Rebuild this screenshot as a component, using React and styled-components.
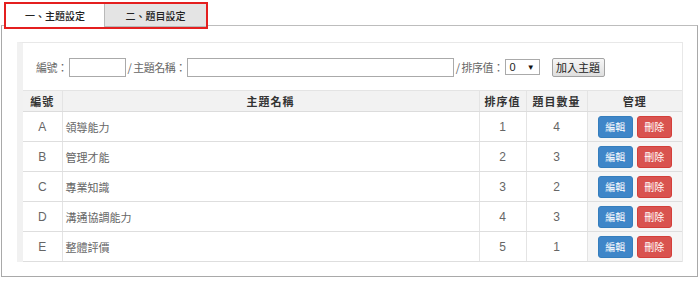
import React from "react";
import styled, { createGlobalStyle } from "styled-components";

const GlobalStyle = createGlobalStyle`
  html, body {
    margin: 0;
    padding: 0;
    background: #fff;
    overflow: hidden;
  }
  body {
    font-family: "Liberation Sans", "Noto Sans CJK TC", sans-serif;
    font-size: 12px;
    color: #555;
  }
`;

const topics = [
  { code: "A", name: "領導能力", order: 1, count: 4 },
  { code: "B", name: "管理才能", order: 2, count: 3 },
  { code: "C", name: "專業知識", order: 3, count: 2 },
  { code: "D", name: "溝通協調能力", order: 4, count: 3 },
  { code: "E", name: "整體評價", order: 5, count: 1 },
];

const App = () => {
  return (
    <Page>
      <GlobalStyle />
      <TabBar>
        <Tab $active>一、主題設定</Tab>
        <Tab>二、題目設定</Tab>
      </TabBar>
      <Panel>
        <InnerBox>
          <FormRow>
            <Label>編號：</Label>
            <TextInput $width={55} />
            <Label $gap>/ 主題名稱：</Label>
            <TextInput $width={265} />
            <Label $gap>/ 排序值：</Label>
            <FakeSelect>
              <span>0</span>
              <Arrow>▼</Arrow>
            </FakeSelect>
            <AddButton>加入主題</AddButton>
          </FormRow>
          <Table>
            <colgroup>
              <col style={{ width: 39 }} />
              <col style={{ width: 417 }} />
              <col style={{ width: 47 }} />
              <col style={{ width: 61 }} />
              <col style={{ width: 95 }} />
            </colgroup>
            <thead>
              <tr>
                <Th>編號</Th>
                <Th>主題名稱</Th>
                <Th>排序值</Th>
                <Th>題目數量</Th>
                <Th>管理</Th>
              </tr>
            </thead>
            <tbody>
              {topics.map((t) => (
                <tr key={t.code}>
                  <Td $center>{t.code}</Td>
                  <Td $cjk>{t.name}</Td>
                  <Td $center>{t.order}</Td>
                  <Td $center>{t.count}</Td>
                  <ManageCell>
                    <ActionButton $color="blue">編輯</ActionButton>
                    <ActionButton $color="red">刪除</ActionButton>
                  </ManageCell>
                </tr>
              ))}
            </tbody>
          </Table>
        </InnerBox>
      </Panel>
    </Page>
  );
};

const Page = styled.div`
  width: 700px;
  height: 282px;
  padding-top: 2px;
  box-sizing: border-box;
`;

const TabBar = styled.div`
  display: flex;
  width: max-content;
  margin-left: 4px;
  border: 2px solid #e41f1f;
  position: relative;
  z-index: 1;
  margin-bottom: -4px;
`;

const Tab = styled.div`
  height: 23px;
  box-sizing: border-box;
  width: ${(p) => (p.$active ? "98px" : "102px")};
  display: flex;
  align-items: center;
  justify-content: center;
  font-family: "Noto Sans CJK TC", sans-serif;
  font-size: 10px;
  font-weight: 500;
  color: #222;
  background: ${(p) => (p.$active ? "#fff" : "#e4e4e4")};
  border: ${(p) => (p.$active ? "none" : "1px solid #b9b9b9")};
  border-top: none;
  border-right: none;
`;

const Panel = styled.div`
  margin: 0 2px 0 1px;
  border: 1px solid #a9a9a9;
  border-top: 1px solid #bdbdbd;
  padding: 16px 14px 14px 15px;
`;

const InnerBox = styled.div`
  border: 1px solid #e8e8e8;
  border-left: 6px solid #f1f1f1;
  border-bottom: none;
`;

const FormRow = styled.div`
  display: flex;
  align-items: center;
  height: 47px;
  padding: 1px 0 0 13px;
  box-sizing: border-box;
  font-family: "Noto Sans CJK TC", sans-serif;
`;

const Label = styled.span`
  color: #666;
  font-size: 11px;
  letter-spacing: -0.5px;
  margin-left: ${(p) => (p.$gap ? "2px" : "0")};
  margin-right: 1px;
`;

const TextInput = styled.div`
  width: ${(p) => p.$width}px;
  height: 17px;
  border: 1px solid #aaa;
  background: #fff;
`;

const FakeSelect = styled.div`
  width: 35px;
  height: 16px;
  border: 1px solid #aaa;
  box-sizing: border-box;
  display: flex;
  align-items: center;
  justify-content: space-between;
  padding: 0 4px;
  font-family: "Liberation Sans", sans-serif;
  font-size: 11px;
  color: #222;
`;

const Arrow = styled.span`
  font-size: 8px;
  color: #111;
`;

const AddButton = styled.div`
  margin-left: 12px;
  width: 53px;
  height: 19px;
  box-sizing: border-box;
  border: 1px solid #a3a3a3;
  border-radius: 2px;
  background: linear-gradient(#f7f7f7, #dedede);
  display: flex;
  align-items: center;
  justify-content: center;
  font-size: 11px;
  color: #222;
`;

const Table = styled.table`
  width: 659px;
  border-collapse: collapse;
  table-layout: fixed;
`;

const Th = styled.th`
  height: 20px;
  padding: 0;
  background: #f2f2f2;
  border-top: 1px solid #e4e4e4;
  border-bottom: 1px solid #dcdcdc;
  border-left: 1px solid #e4e4e4;
  font-family: "Noto Sans CJK TC", sans-serif;
  font-weight: 700;
  font-size: 11px;
  letter-spacing: 1px;
  color: #333;
  text-align: center;
  &:first-child {
    border-left: none;
  }
`;

const Td = styled.td`
  height: 29px;
  padding: 0 0 0 ${(p) => (p.$center ? "0" : "3px")};
  border-bottom: 1px solid #dedede;
  border-left: 1px solid #e4e4e4;
  text-align: ${(p) => (p.$center ? "center" : "left")};
  font-family: "Liberation Sans", "Noto Sans CJK TC", sans-serif;
  font-size: ${(p) => (p.$cjk ? "11px" : "12px")};
  color: #666;
  &:first-child {
    border-left: none;
  }
`;

const ManageCell = styled.td`
  height: 29px;
  padding: 0;
  border-bottom: 1px solid #dedede;
  border-left: 1px solid #e4e4e4;
  background: #f6f6f6;
  text-align: center;
  font-size: 0;
  white-space: nowrap;
`;

const ActionButton = styled.span`
  display: inline-flex;
  align-items: center;
  justify-content: center;
  width: 35px;
  height: 22px;
  box-sizing: border-box;
  margin: 0 2px;
  border-radius: 3px;
  font-family: "Noto Sans CJK TC", sans-serif;
  font-size: 10px;
  color: #fff;
  background: ${(p) => (p.$color === "blue" ? "#3f86c8" : "#d9534f")};
  border: 1px solid ${(p) => (p.$color === "blue" ? "#357ebd" : "#d43f3a")};
  vertical-align: middle;
`;

export default App;
